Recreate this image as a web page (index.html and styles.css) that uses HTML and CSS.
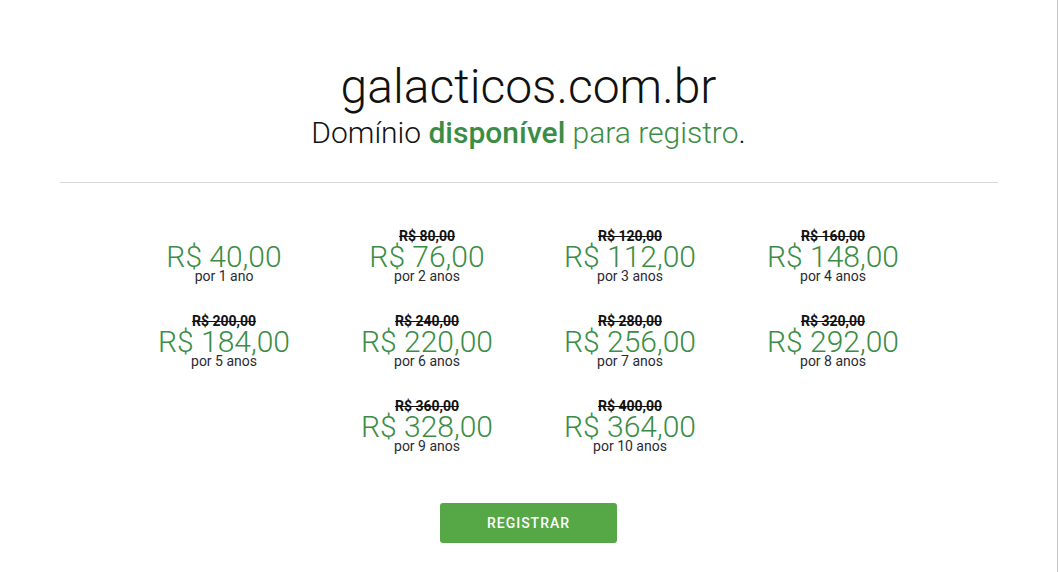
FILE: index.html
```html
<!DOCTYPE html>
<html lang="pt-BR">
<head>
<meta charset="UTF-8">
<meta name="viewport" content="width=device-width, initial-scale=1.0">
<title>galacticos.com.br</title>
<link rel="stylesheet" href="styles.css">
</head>
<body>

<div class="page">
    <div class="container">
        <div class="header">
            <h1 class="domain">galacticos.com.br</h1>
            <p class="status">Domínio <strong>disponível</strong> <span class="green">para registro</span>.</p>
        </div>
        <hr class="divider">

        <div class="prices">
            <div class="price">
                <div class="old"></div>
                <div class="value">R$ 40,00</div>
                <div class="period">por 1 ano</div>
            </div>
            <div class="price">
                <div class="old">R$ 80,00</div>
                <div class="value">R$ 76,00</div>
                <div class="period">por 2 anos</div>
            </div>
            <div class="price">
                <div class="old">R$ 120,00</div>
                <div class="value">R$ 112,00</div>
                <div class="period">por 3 anos</div>
            </div>
            <div class="price">
                <div class="old">R$ 160,00</div>
                <div class="value">R$ 148,00</div>
                <div class="period">por 4 anos</div>
            </div>
            <div class="price">
                <div class="old">R$ 200,00</div>
                <div class="value">R$ 184,00</div>
                <div class="period">por 5 anos</div>
            </div>
            <div class="price">
                <div class="old">R$ 240,00</div>
                <div class="value">R$ 220,00</div>
                <div class="period">por 6 anos</div>
            </div>
            <div class="price">
                <div class="old">R$ 280,00</div>
                <div class="value">R$ 256,00</div>
                <div class="period">por 7 anos</div>
            </div>
            <div class="price">
                <div class="old">R$ 320,00</div>
                <div class="value">R$ 292,00</div>
                <div class="period">por 8 anos</div>
            </div>
            <div class="price">
                <div class="old">R$ 360,00</div>
                <div class="value">R$ 328,00</div>
                <div class="period">por 9 anos</div>
            </div>
            <div class="price">
                <div class="old">R$ 400,00</div>
                <div class="value">R$ 364,00</div>
                <div class="period">por 10 anos</div>
            </div>
        </div>

        <div class="actions">
            <button class="btn-register">Registrar</button>
        </div>
    </div>
</div>

</body>
</html>
```

FILE: styles.css
```css
body {
    font-family: Roboto, "Liberation Sans", Arial, sans-serif;
    margin: 0;
    padding: 0;
    background-color: #fff;
    color: #111;
}
.page {
    min-height: 100vh;
    border-right: 1px solid #c8c8c8;
}
.container {
    max-width: 938px;
    margin: 0 auto;
    padding-top: 57px;
}

.header {
    text-align: center;
}
.domain {
    font-size: 48px;
    font-weight: 300;
    line-height: 60px;
    margin: 0;
    color: #111;
}
.status {
    font-size: 30px;
    font-weight: 300;
    line-height: 32px;
    margin: 0;
}
.status strong {
    font-weight: 500;
    color: #3a8d45;
}
.green {
    color: #3a8d45;
}

.divider {
    border: none;
    border-top: 1px solid #d6d6d6;
    margin: 33px 0 0 0;
}

.prices {
    width: 812px;
    margin: 47px auto 0;
    display: flex;
    flex-wrap: wrap;
    justify-content: center;
    row-gap: 35px;
}
.price {
    width: 203px;
    text-align: center;
}
.old {
    height: 12px;
    font-size: 14px;
    font-weight: 700;
    line-height: 12px;
    text-decoration: line-through;
    color: #111;
}
.value {
    font-size: 30px;
    font-weight: 300;
    line-height: 30px;
    color: #3a8d45;
}
.period {
    height: 8px;
    font-size: 14px;
    line-height: 8px;
    color: #2a2a33;
}

.actions {
    text-align: center;
    margin-top: 53px;
}
.btn-register {
    width: 177px;
    height: 40px;
    background-color: #55a845;
    color: #fff;
    border: none;
    border-radius: 3px;
    font-family: Roboto, "Liberation Sans", Arial, sans-serif;
    font-size: 14px;
    font-weight: 500;
    letter-spacing: 1px;
    text-transform: uppercase;
    cursor: pointer;
}
.btn-register:hover {
    background-color: #4a9a3b;
}
```
